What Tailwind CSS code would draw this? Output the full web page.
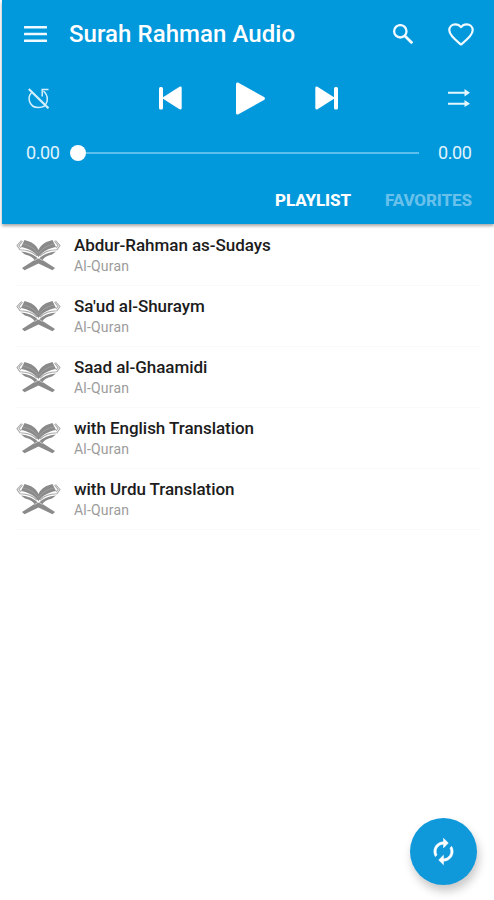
<!DOCTYPE html>
<html lang="en">
<head>
    <meta charset="UTF-8">
    <meta name="viewport" content="width=device-width, initial-scale=1.0">
    <title>Surah Rahman Audio</title>
    <script src="https://cdn.jsdelivr.net/npm/@tailwindcss/browser@4"></script>
</head>
<body class="bg-white font-['Roboto',sans-serif]">
    <!-- Book stand icon, shared by the list rows -->
    <svg class="hidden">
        <symbol id="quran" viewBox="0 0 45 32">
            <g fill="#8a8a8a">
                <path d="M22.500 11C20 5.500 15 2.500 8.500 1L5 8C12 9.500 18 12 22.500 18C27 12 33 9.500 40 8L36.500 1C30 2.500 25 5.500 22.500 11Z"/>
                <path d="M5 12.500C12 13 18 15.500 22.500 20C27 15.500 33 13 40 12.500L36 15.500C31 16.500 28 18.500 26.500 21L39 29L36.500 31.200L22.500 24.500L8.500 31.200L6 29L18.500 21C17 18.500 14 16.500 9 15.500Z"/>
            </g>
            <g fill="none" stroke="#a8a8a8" stroke-width="1.100">
                <path d="M5.500 1.500L1 6.500L4 10.800C10 10.800 17 13 21 17"/>
                <path d="M39.500 1.500L44 6.500L41 10.800C35 10.800 28 13 24 17"/>
                <path d="M6.500 2L3 6.500L5 9"/>
                <path d="M38.500 2L42 6.500L40 9"/>
            </g>
            <path d="M7 5C14 6.500 19 9.500 22 14.500M38 5C31 6.500 26 9.500 23 14.500" fill="none" stroke="#a6a6a6" stroke-width=".7"/>
            <path d="M18.500 21.500L22.500 19L26.500 21.500" fill="none" stroke="#ddd" stroke-width=".8"/>
        </symbol>
    </svg>

    <div class="relative h-[900px] overflow-hidden">
        <!-- Header -->
        <header class="ml-0.5 h-[224px] bg-[#0298dc] text-white shadow-[0_2px_3px_rgba(0,0,0,0.35)]">
            <!-- Title bar -->
            <div class="flex h-[68px] items-center pl-[22px] pr-5">
                <svg class="h-[17px] w-[23px]" viewBox="0 0 23 17" fill="#f0faff">
                    <rect y="0" width="23" height="2.600" rx=".5"/>
                    <rect y="6.700" width="23" height="2.600" rx=".5"/>
                    <rect y="13.400" width="23" height="2.600" rx=".5"/>
                </svg>
                <h1 class="ml-[22px] flex-1 whitespace-nowrap text-2xl font-medium tracking-[0.06px]">Surah Rahman Audio</h1>
                <svg class="mr-[35px] h-[21px] w-[21px]" viewBox="0 0 21 21" fill="none" stroke="#f0faff" stroke-width="2.300">
                    <circle cx="8.300" cy="7.300" r="6.200"/>
                    <path d="M12.700 11.700L20.300 19.300" stroke-width="2.800"/>
                </svg>
                <svg class="h-[23px] w-[26px]" viewBox="0 0 26 23" fill="none" stroke="#f0faff" stroke-width="2.200" stroke-linejoin="round">
                    <path d="M13 21.500C8 17.500 1.300 12.500 1.300 7.300C1.300 3.800 3.900 1.300 7.300 1.300C9.600 1.300 11.700 2.400 13 4.200C14.300 2.400 16.400 1.300 18.700 1.300C22.100 1.300 24.700 3.800 24.700 7.300C24.700 12.500 18 17.500 13 21.500Z"/>
                </svg>
            </div>

            <!-- Player controls -->
            <div class="flex h-[60px] items-center justify-between pl-[26px] pr-6">
                <svg class="h-[21px] w-[21px]" viewBox="0 0 21 21" fill="none" stroke="#d5f0fc" stroke-width="1.500">
                    <path d="M4.500 4C-1 8 0 19.500 10.500 19.500C20.500 19.500 21.500 8.500 15.500 3"/>
                    <path d="M14.200 8.500V1.500H20.500"/>
                    <path d="M.8 1L20.500 20.300" stroke-width="2.200"/>
                </svg>
                <div class="flex items-center">
                    <svg class="h-6 w-[23px]" viewBox="0 0 23 24" fill="#fff">
                        <rect x="0" y="1" width="4" height="22.500" rx="1.500"/>
                        <path d="M4 11.200L20.500 .8Q22.700 0 22.700 2V22Q22.700 24 20.500 23.200L4 12.800Q3 12 4 11.200Z"/>
                    </svg>
                    <svg class="ml-[54px] mr-[50px] h-[33px] w-[29px]" viewBox="0 0 29 33" fill="#fff">
                        <path d="M0 2Q0 0 2 .6L28 15Q30 16.500 28 18L2 32.400Q0 33 0 31Z"/>
                    </svg>
                    <svg class="h-6 w-[23px]" viewBox="0 0 23 24" fill="#fff">
                        <rect x="19" y="1" width="4" height="22.500" rx="1.500"/>
                        <path d="M19 11.200L2.500 .8Q.3 0 .3 2V22Q.3 24 2.500 23.200L19 12.800Q20 12 19 11.200Z"/>
                    </svg>
                </div>
                <svg class="h-[18px] w-[22px]" viewBox="0 0 22 18" fill="#e6f6fe">
                    <path d="M0 2.800H16.500V0L22 3.700L16.500 7.500V4.700H0ZM0 13.800H16.500V11L22 14.700L16.500 18V15.700H0Z"/>
                </svg>
            </div>

            <!-- Seek bar -->
            <div class="flex h-[49px] items-center pl-6 pr-[22px] text-lg text-[#e0f4fd]">
                <span class="w-[34px] tracking-[-0.4px]">0.00</span>
                <div class="ml-[10px] flex flex-1 items-center">
                    <div class="h-4 w-4 rounded-full bg-white"></div>
                    <div class="h-0.5 flex-1 bg-[#5cbfec]"></div>
                </div>
                <span class="ml-[19px] w-[34px] tracking-[-0.4px]">0.00</span>
            </div>

            <!-- Tabs -->
            <nav class="flex h-12 items-center justify-end gap-[34px] pr-[22px] text-[17px] font-extrabold tracking-[-0.1px]">
                <span>PLAYLIST</span>
                <span class="text-[#68c1eb]">FAVORITES</span>
            </nav>
        </header>

        <!-- Playlist -->
        <ul class="pl-4 pr-[14px] pt-px">
            <li class="flex h-[61px] items-center border-b border-[#fafafa]">
                <svg class="h-8 w-[45px]"><use href="#quran"/></svg>
                <div class="ml-[13px]">
                    <p class="text-[17px] leading-[22px] font-medium tracking-[-0.05px] text-[#1c1c1c]">Abdur-Rahman as-Sudays</p>
                    <p class="text-sm leading-5 tracking-[0.2px] text-[#9c9c9c]">Al-Quran</p>
                </div>
            </li>
            <li class="flex h-[61px] items-center border-b border-[#fafafa]">
                <svg class="h-8 w-[45px]"><use href="#quran"/></svg>
                <div class="ml-[13px]">
                    <p class="text-[17px] leading-[22px] font-medium tracking-[-0.05px] text-[#1c1c1c]">Sa'ud al-Shuraym</p>
                    <p class="text-sm leading-5 tracking-[0.2px] text-[#9c9c9c]">Al-Quran</p>
                </div>
            </li>
            <li class="flex h-[61px] items-center border-b border-[#fafafa]">
                <svg class="h-8 w-[45px]"><use href="#quran"/></svg>
                <div class="ml-[13px]">
                    <p class="text-[17px] leading-[22px] font-medium tracking-[-0.05px] text-[#1c1c1c]">Saad al-Ghaamidi</p>
                    <p class="text-sm leading-5 tracking-[0.2px] text-[#9c9c9c]">Al-Quran</p>
                </div>
            </li>
            <li class="flex h-[61px] items-center border-b border-[#fafafa]">
                <svg class="h-8 w-[45px]"><use href="#quran"/></svg>
                <div class="ml-[13px]">
                    <p class="text-[17px] leading-[22px] font-medium tracking-[-0.05px] text-[#1c1c1c]">with English Translation</p>
                    <p class="text-sm leading-5 tracking-[0.2px] text-[#9c9c9c]">Al-Quran</p>
                </div>
            </li>
            <li class="flex h-[61px] items-center border-b border-[#fafafa]">
                <svg class="h-8 w-[45px]"><use href="#quran"/></svg>
                <div class="ml-[13px]">
                    <p class="text-[17px] leading-[22px] font-medium tracking-[-0.05px] text-[#1c1c1c]">with Urdu Translation</p>
                    <p class="text-sm leading-5 tracking-[0.2px] text-[#9c9c9c]">Al-Quran</p>
                </div>
            </li>
        </ul>

        <!-- Refresh button -->
        <button class="absolute bottom-[15px] right-[17px] flex h-[67px] w-[67px] items-center justify-center rounded-full bg-[#0f98da] shadow-[2px_6px_10px_rgba(0,0,0,0.22)]">
            <svg class="h-[29px] w-[29px]" viewBox="0 0 24 24" fill="#fff" stroke="#fff" stroke-width=".4">
                <path d="M12 6v3l4-4-4-4v3c-4.420 0-8 3.580-8 8 0 1.570.46 3.030 1.240 4.260L6.700 14.800c-.45-.83-.7-1.790-.7-2.800 0-3.310 2.690-6 6-6zm6.760 1.740L17.300 9.200c.44.84.7 1.790.7 2.800 0 3.310-2.690 6-6 6v-3l-4 4 4 4v-3c4.420 0 8-3.580 8-8 0-1.570-.46-3.030-1.240-4.260z"/>
            </svg>
        </button>
    </div>
</body>
</html>
